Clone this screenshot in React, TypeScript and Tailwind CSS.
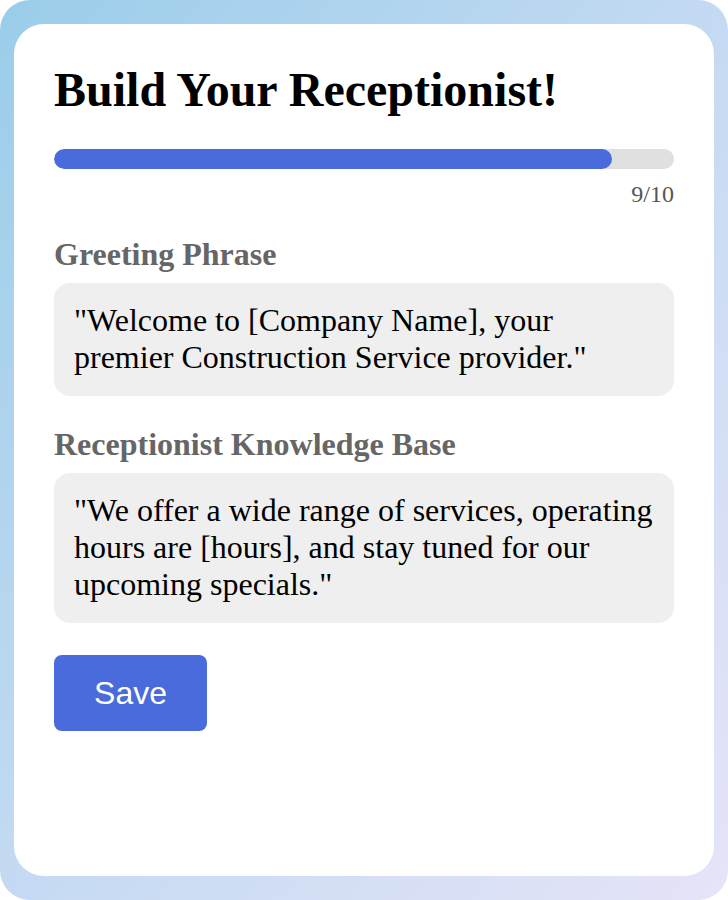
const serif = "font-['Liberation_Serif','Times_New_Roman',serif]";

function Field({ label, text }: { label: string; text: string }) {
  return (
    <div>
      <h2 className="text-[32px] leading-[36px] font-bold text-[#666666]">{label}</h2>
      <div className="mt-[11px] rounded-[16px] bg-[#efefef] px-5 pt-[19px] pb-[20px] text-[32px] leading-[37px] text-black">
        {text}
      </div>
    </div>
  );
}

export default function App() {
  const step = 9;
  const total = 10;

  return (
    <div className="min-h-[900px] w-full rounded-[30px] bg-gradient-to-br from-[#9acdea] via-[#c4daf2] to-[#e6e4f8] px-[14px] py-[24px]">
      <div className={`h-[852px] rounded-[30px] bg-white px-10 pt-[38px] ${serif}`}>
        <h1 className="text-[48px] leading-[56px] font-bold text-black">Build Your Receptionist!</h1>

        <div className="mt-[31px] h-5 w-full overflow-hidden rounded-full bg-[#e0e0e0]">
          <div
            className="h-full rounded-full bg-[#4a6bdb]"
            style={{ width: `${(step / total) * 100}%` }}
          />
        </div>
        <div className="mt-[11px] text-right text-[24px] leading-[28px] text-[#555555]">
          {step}/{total}
        </div>

        <div className="mt-[28px] flex flex-col gap-[30px]">
          <Field
            label="Greeting Phrase"
            text={'"Welcome to [Company Name], your premier Construction Service provider."'}
          />
          <Field
            label="Receptionist Knowledge Base"
            text={'"We offer a wide range of services, operating hours are [hours], and stay tuned for our upcoming specials."'}
          />
        </div>

        <button
          type="button"
          className="mt-[32px] h-[76px] w-[153px] rounded-lg bg-[#4a6bdb] font-['Liberation_Sans',Arial,sans-serif] text-[32px] text-white"
        >
          Save
        </button>
      </div>
    </div>
  );
}
